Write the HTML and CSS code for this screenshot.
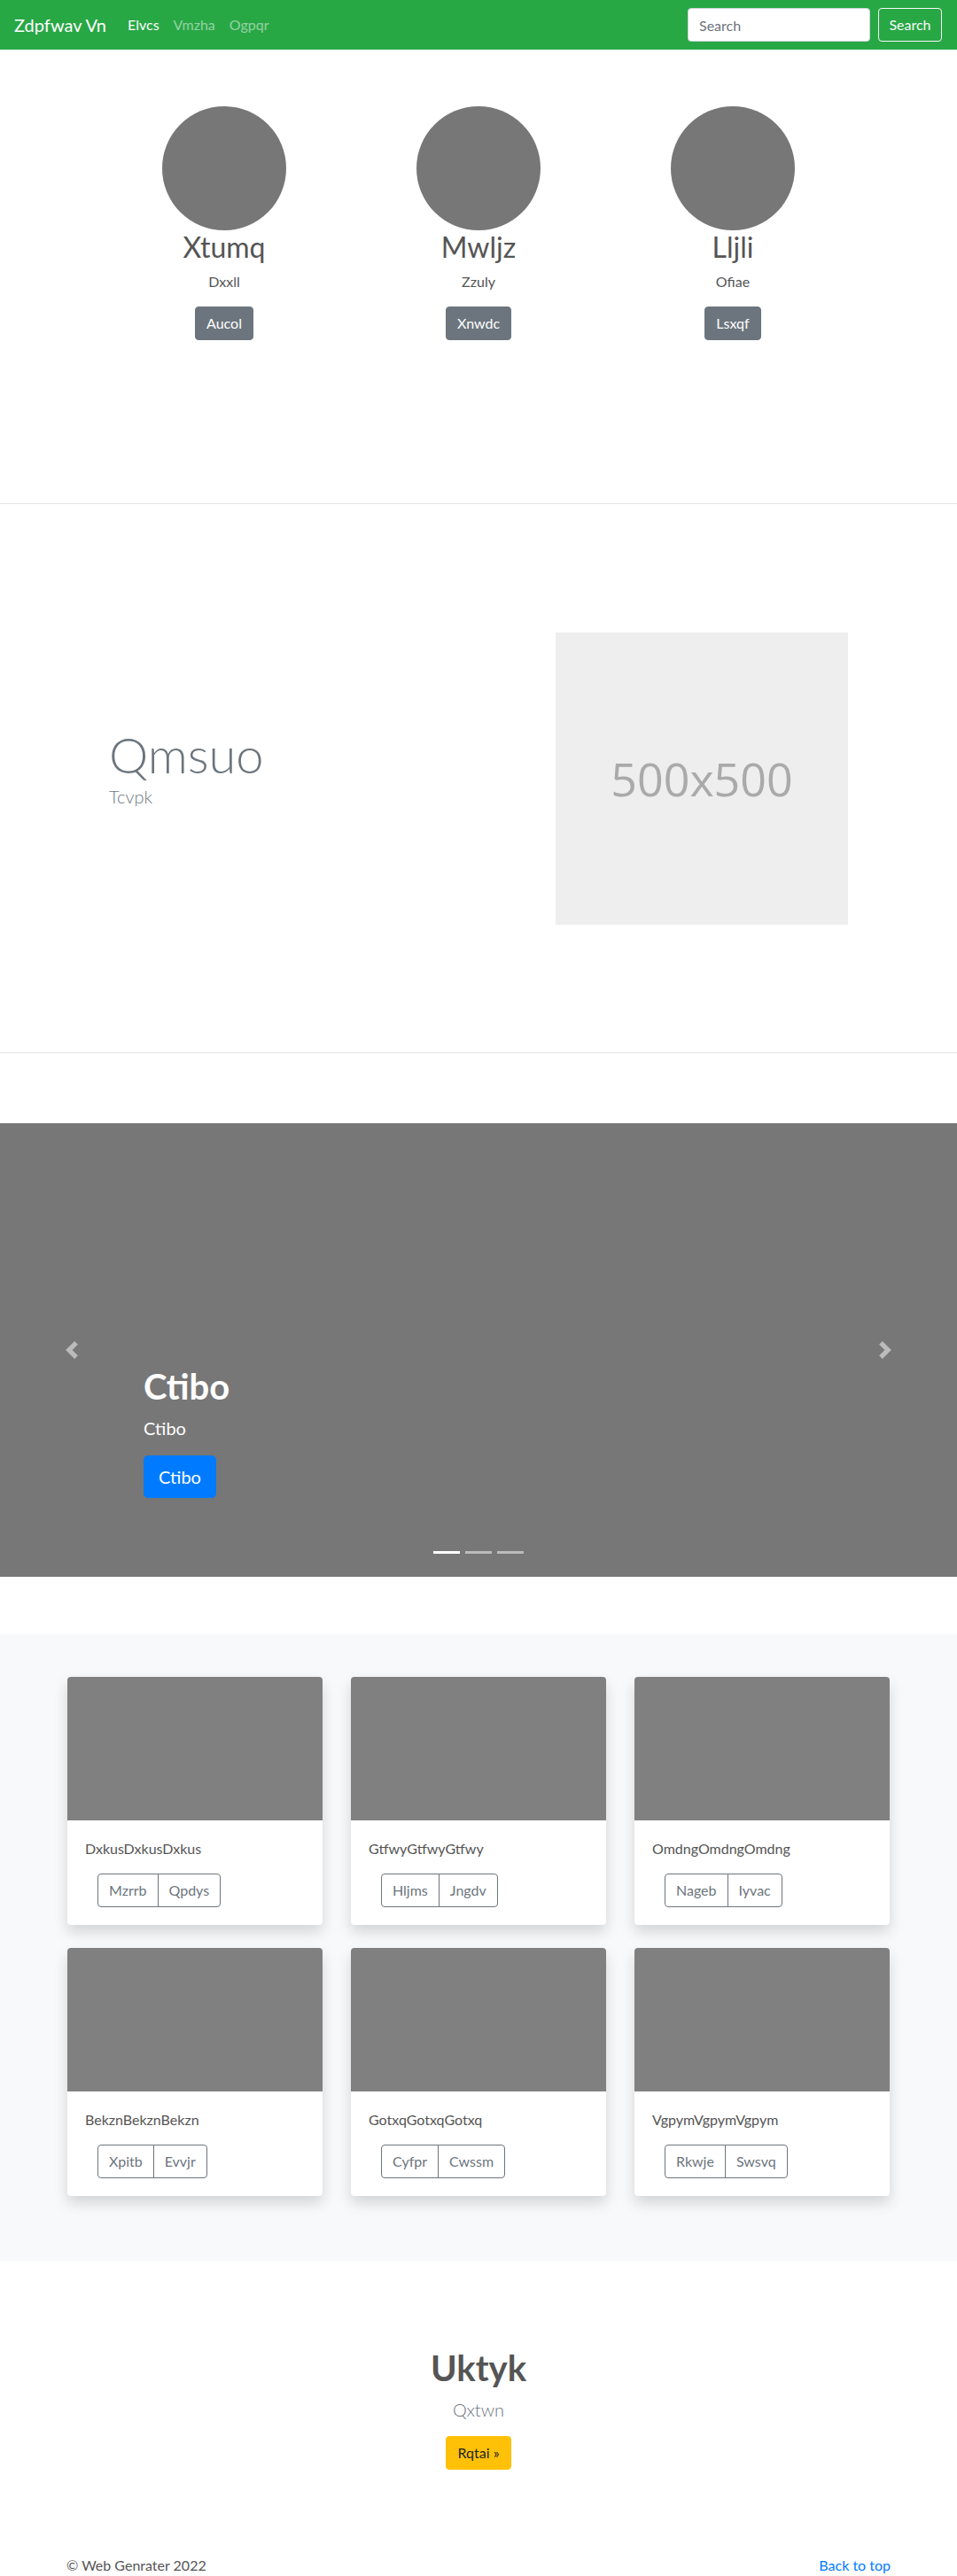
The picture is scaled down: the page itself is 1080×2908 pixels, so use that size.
FILE: index.html
```html
<!DOCTYPE html>
<html lang="en">
<head>
<meta charset="utf-8">
<title>Zdpfwav Vn</title>
<link rel="stylesheet" href="styles.css">
</head>
<body>
<nav class="navbar">
  <a class="brand" href="#">Zdpfwav Vn</a>
  <ul class="nav">
    <li><a class="nav-link active" href="#">Elvcs</a></li>
    <li><a class="nav-link" href="#">Vmzha</a></li>
    <li><a class="nav-link" href="#">Ogpqr</a></li>
  </ul>
  <form class="search">
    <input class="search-input" type="text" placeholder="Search">
    <button class="btn btn-outline-light" type="button">Search</button>
  </form>
</nav>

<section class="team">
  <div class="team-grid">
    <div class="member">
      <div class="avatar"></div>
      <h2 class="member-name">Xtumq</h2>
      <p class="member-role">Dxxll</p>
      <a class="btn btn-secondary" href="#">Aucol</a>
    </div>
    <div class="member">
      <div class="avatar"></div>
      <h2 class="member-name">Mwljz</h2>
      <p class="member-role">Zzuly</p>
      <a class="btn btn-secondary" href="#">Xnwdc</a>
    </div>
    <div class="member">
      <div class="avatar"></div>
      <h2 class="member-name">Lljli</h2>
      <p class="member-role">Ofiae</p>
      <a class="btn btn-secondary" href="#">Lsxqf</a>
    </div>
  </div>
</section>

<section class="feature">
  <div class="feature-inner">
    <div class="feature-text">
      <h1 class="display">Qmsuo</h1>
      <p class="lead muted">Tcvpk</p>
    </div>
    <div class="placeholder">500x500</div>
  </div>
</section>

<section class="carousel">
  <a class="control control-prev" href="#">
    <svg viewBox="0 0 8 8" width="20" height="20"><path d="M5.25 0l-4 4 4 4 1.5-1.5L4.25 4l2.5-2.5L5.25 0z"/></svg>
  </a>
  <a class="control control-next" href="#">
    <svg viewBox="0 0 8 8" width="20" height="20"><path d="M2.75 0l-1.5 1.5L3.75 4l-2.5 2.5L2.75 8l4-4-4-4z"/></svg>
  </a>
  <div class="caption">
    <h1 class="caption-title">Ctibo</h1>
    <p class="caption-text">Ctibo</p>
    <a class="btn btn-lg btn-primary" href="#">Ctibo</a>
  </div>
  <ol class="indicators">
    <li class="active"></li>
    <li></li>
    <li></li>
  </ol>
</section>

<section class="album">
  <div class="card-grid">
    <div class="card">
      <div class="card-img"></div>
      <div class="card-body">
        <p class="card-text">DxkusDxkusDxkus</p>
        <div class="btn-group"><a class="btn btn-outline-secondary" href="#">Mzrrb</a><a class="btn btn-outline-secondary" href="#">Qpdys</a></div>
      </div>
    </div>
    <div class="card">
      <div class="card-img"></div>
      <div class="card-body">
        <p class="card-text">GtfwyGtfwyGtfwy</p>
        <div class="btn-group"><a class="btn btn-outline-secondary" href="#">Hljms</a><a class="btn btn-outline-secondary" href="#">Jngdv</a></div>
      </div>
    </div>
    <div class="card">
      <div class="card-img"></div>
      <div class="card-body">
        <p class="card-text">OmdngOmdngOmdng</p>
        <div class="btn-group"><a class="btn btn-outline-secondary" href="#">Nageb</a><a class="btn btn-outline-secondary" href="#">Iyvac</a></div>
      </div>
    </div>
    <div class="card">
      <div class="card-img"></div>
      <div class="card-body">
        <p class="card-text">BekznBekznBekzn</p>
        <div class="btn-group"><a class="btn btn-outline-secondary" href="#">Xpitb</a><a class="btn btn-outline-secondary" href="#">Evvjr</a></div>
      </div>
    </div>
    <div class="card">
      <div class="card-img"></div>
      <div class="card-body">
        <p class="card-text">GotxqGotxqGotxq</p>
        <div class="btn-group"><a class="btn btn-outline-secondary" href="#">Cyfpr</a><a class="btn btn-outline-secondary" href="#">Cwssm</a></div>
      </div>
    </div>
    <div class="card">
      <div class="card-img"></div>
      <div class="card-body">
        <p class="card-text">VgpymVgpymVgpym</p>
        <div class="btn-group"><a class="btn btn-outline-secondary" href="#">Rkwje</a><a class="btn btn-outline-secondary" href="#">Swsvq</a></div>
      </div>
    </div>
  </div>
</section>

<section class="cta">
  <h1 class="cta-title">Uktyk</h1>
  <p class="lead muted">Qxtwn</p>
  <a class="btn btn-warning" href="#">Rqtai »</a>
</section>

<footer class="footer">
  <p class="copy">© Web Genrater 2022</p>
  <a class="back" href="#">Back to top</a>
</footer>
</body>
</html>
```

FILE: styles.css
```css
* { box-sizing: border-box; }

body {
  margin: 0;
  font-family: Lato, "Open Sans", sans-serif;
  font-size: 16px;
  line-height: 1.5;
  color: #212529;
  background: #fff;
}

a { text-decoration: none; }

.btn {
  display: inline-block;
  font-size: 16px;
  line-height: 24px;
  padding: 6px 12px;
  border: 1px solid transparent;
  border-radius: 4px;
  font-family: inherit;
  cursor: pointer;
}
.btn-lg { font-size: 20px; line-height: 30px; padding: 8px 16px; border-radius: 5px; }
.btn-secondary { background: #6c757d; border-color: #6c757d; color: #fff; }
.btn-primary { background: #007bff; border-color: #007bff; color: #fff; }
.btn-warning { background: #ffc107; border-color: #ffc107; color: #212529; }
.btn-outline-light { background: transparent; border-color: #f8f9fa; color: #f8f9fa; }
.btn-outline-secondary { background: transparent; border-color: #6c757d; color: #6c757d; }

/* navbar */
.navbar {
  height: 56px;
  background: #28a745;
  display: flex;
  align-items: center;
  padding: 0 17px 0 16px;
}
.brand {
  font-size: 20px;
  line-height: 30px;
  color: #fff;
  margin-right: 16px;
  white-space: nowrap;
}
.nav {
  list-style: none;
  margin: 0;
  padding: 0;
  display: flex;
}
.nav-link {
  display: block;
  padding: 8px;
  color: rgba(255, 255, 255, 0.5);
}
.nav-link.active { color: #fff; }
.search {
  margin: 0 0 0 auto;
  display: flex;
  align-items: center;
}
.search-input {
  width: 206px;
  height: 38px;
  padding: 6px 12px;
  font-family: inherit;
  font-size: 16px;
  border: 1px solid #ced4da;
  border-radius: 4px;
  color: #495057;
}
.search-input::placeholder { color: #6c757d; }
.search .btn { margin-left: 9px; height: 38px; width: 72px; padding: 6px 0; text-align: center; }

/* team */
.team {
  height: 513px;
  padding-top: 64px;
  border-bottom: 1px solid #e5e5e5;
}
.team-grid {
  display: grid;
  grid-template-columns: repeat(3, 287px);
  justify-content: center;
}
.member { text-align: center; }
.avatar {
  width: 140px;
  height: 140px;
  border-radius: 50%;
  background: #777;
  margin: 0 auto;
}
.member-name {
  margin: 0 0 8px;
  font-size: 32px;
  font-weight: 400;
  line-height: 1.2;
  color: #555;
}
.member-role {
  margin: 0 0 16px;
  color: #555;
}

/* feature */
.feature {
  height: 620px;
  border-bottom: 1px solid #e5e5e5;
  display: flex;
  align-items: center;
}
.feature-inner {
  width: 834px;
  margin: 0 auto;
  display: flex;
  align-items: center;
  justify-content: space-between;
}
.feature-text { padding-bottom: 25px; }
.display {
  margin: 0 0 -1px;
  font-size: 56px;
  font-weight: 300;
  line-height: 1.2;
  color: #6c757d;
}
.lead {
  font-size: 20px;
  font-weight: 300;
  line-height: 30px;
  margin: 0;
}
.muted { color: #6c757d; }
.placeholder {
  width: 330px;
  height: 330px;
  background: #eee;
  color: #aaa;
  font-family: "Open Sans", sans-serif;
  font-size: 52px;
  display: flex;
  align-items: center;
  justify-content: center;
}

/* carousel */
.carousel {
  position: relative;
  margin-top: 79px;
  height: 512px;
  background: #777;
}
.control {
  position: absolute;
  top: 246px;
  width: 20px;
  height: 20px;
  fill: #fff;
  opacity: 0.5;
}
.control svg { display: block; }
.control-prev { left: 71px; }
.control-next { right: 71px; }
.caption {
  position: absolute;
  left: 162px;
  top: 273px;
  color: #fff;
}
.caption-title {
  margin: 0 0 8px;
  font-size: 40px;
  font-weight: 700;
  line-height: 1.2;
}
.caption-text {
  margin: 0 0 16px;
  font-size: 20px;
  line-height: 30px;
}
.indicators {
  position: absolute;
  left: 489px;
  top: 483px;
  margin: 0;
  padding: 0;
  list-style: none;
  display: flex;
  gap: 6px;
}
.indicators li {
  width: 30px;
  height: 3px;
  background: rgba(255, 255, 255, 0.5);
}
.indicators li.active { background: #fff; }

/* album */
.album {
  margin-top: 65px;
  background: #f8f9fa;
  padding: 48px 0 74px;
}
.card-grid {
  width: 928px;
  margin: 0 auto;
  display: grid;
  grid-template-columns: repeat(3, 288px);
  column-gap: 32px;
  row-gap: 26px;
}
.card {
  background: #fff;
  border-radius: 4px;
  overflow: hidden;
  box-shadow: 0 8px 16px rgba(0, 0, 0, 0.15);
}
.card-img {
  height: 162px;
  background: #808080;
}
.card-body { padding: 20px; }
.card-text {
  margin: 0 0 16px;
  color: #555;
}
.btn-group {
  display: inline-flex;
  margin-left: 14px;
}
.btn-group .btn:first-child { border-top-right-radius: 0; border-bottom-right-radius: 0; }
.btn-group .btn:last-child { border-top-left-radius: 0; border-bottom-left-radius: 0; margin-left: -1px; }

/* cta */
.cta {
  text-align: center;
  padding: 96px 0 48px;
}
.cta-title {
  margin: 0 0 8px;
  font-size: 40px;
  font-weight: 700;
  line-height: 1.2;
  color: #555;
}
.cta .lead { margin-bottom: 15px; }

/* footer */
.footer {
  width: 930px;
  margin: 0 auto;
  padding-top: 48px;
  display: flex;
  justify-content: space-between;
}
.copy { margin: 0; color: #555; }
.back { color: #007bff; }
```
